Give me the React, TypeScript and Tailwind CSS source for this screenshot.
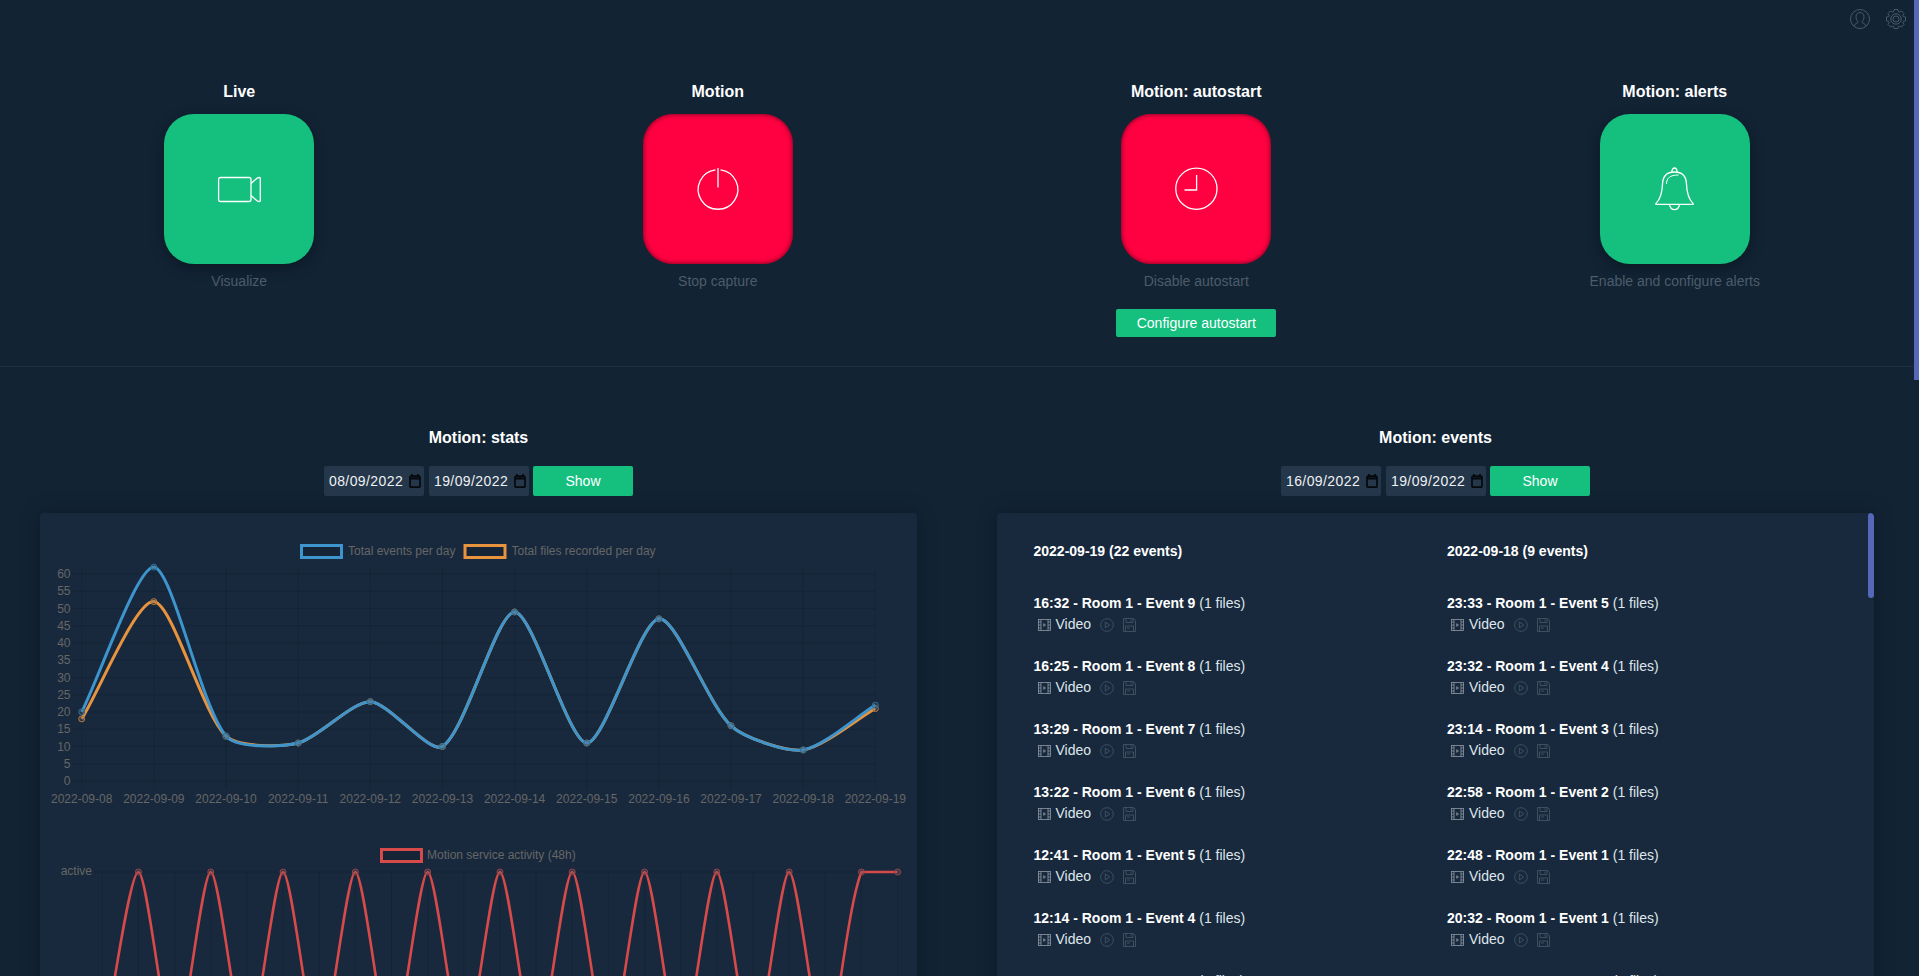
import React from 'react';

type Pt = { x: number; y: number };

const FONT_COLOR = '#666666';
const GRID = 'rgba(0,0,0,0.13)';
const TENSION = 0.25;

// chart.js style spline, capped to the plot area
const splinePath = (pts: Pt[], top: number, bottom: number, left: number, right: number) => {
  const cap = (p: Pt) => ({
    x: Math.min(right, Math.max(left, p.x)),
    y: Math.min(bottom, Math.max(top, p.y)),
  });
  const ctrl = pts.map((p, i) => {
    const a = pts[Math.max(i - 1, 0)];
    const b = pts[Math.min(i + 1, pts.length - 1)];
    const d1 = Math.hypot(p.x - a.x, p.y - a.y);
    const d2 = Math.hypot(b.x - p.x, b.y - p.y);
    const total = d1 + d2 || 1;
    const fa = (TENSION * d1) / total;
    const fb = (TENSION * d2) / total;
    return {
      prev: cap({ x: p.x - fa * (b.x - a.x), y: p.y - fa * (b.y - a.y) }),
      next: cap({ x: p.x + fb * (b.x - a.x), y: p.y + fb * (b.y - a.y) }),
    };
  });
  let d = `M${pts[0].x} ${pts[0].y}`;
  for (let i = 1; i < pts.length; i++) {
    d += ` C${ctrl[i - 1].next.x} ${ctrl[i - 1].next.y} ${ctrl[i].prev.x} ${ctrl[i].prev.y} ${pts[i].x} ${pts[i].y}`;
  }
  return d;
};

const days = ['08', '09', '10', '11', '12', '13', '14', '15', '16', '17', '18', '19'].map(d => `2022-09-${d}`);
const blue = [20, 62, 13, 11, 23, 10, 49, 11, 47, 16, 9, 22];
const orange = [18, 52, 13, 11, 23, 10, 49, 11, 47, 16, 9, 21];

const X0 = 81.7;
const XSTEP = 72.15;
const Y0 = 781;
const YUNIT = 3.45;
const TOP = Y0 - 62 * YUNIT;
const XEND = X0 + 11 * XSTEP;

const toPts = (vals: number[]) => vals.map((v, i) => ({ x: X0 + i * XSTEP, y: Y0 - v * YUNIT }));

const StatsChart: React.FC = () => {
  const bluePts = toPts(blue);
  const orangePts = toPts(orange);
  return (
    <svg className="block" width={877} height={318} viewBox="40 513 877 318" fontFamily="'Liberation Sans', Arial, sans-serif" fontSize={12}>
      <rect x={301.5} y={545.5} width={40} height={12} fill="rgba(0,0,0,0.1)" stroke="#3e95cd" strokeWidth={3} />
      <text x={348} y={555} fill={FONT_COLOR}>Total events per day</text>
      <rect x={465} y={545.5} width={40} height={12} fill="rgba(0,0,0,0.1)" stroke="#e8943f" strokeWidth={3} />
      <text x={511.5} y={555} fill={FONT_COLOR}>Total files recorded per day</text>

      {Array.from({ length: 13 }, (_, i) => i * 5).map(v => (
        <g key={v}>
          <line x1={73} x2={XEND} y1={Y0 - v * YUNIT} y2={Y0 - v * YUNIT} stroke={GRID} />
          <text x={70.5} y={Y0 - v * YUNIT + 4} textAnchor="end" fill={FONT_COLOR}>{v}</text>
        </g>
      ))}
      {days.map((d, i) => (
        <g key={d}>
          <line x1={X0 + i * XSTEP} x2={X0 + i * XSTEP} y1={TOP} y2={Y0 + 8} stroke={GRID} />
          <text x={X0 + i * XSTEP} y={803} textAnchor="middle" fill={FONT_COLOR}>{d}</text>
        </g>
      ))}

      <path d={splinePath(orangePts, TOP, Y0, X0, XEND)} fill="none" stroke="#e8943f" strokeWidth={3} />
      {orangePts.map((p, i) => (
        <circle key={i} cx={p.x} cy={p.y} r={3} fill="rgba(90,100,110,0.3)" stroke="#b97a3c" />
      ))}
      <path d={splinePath(bluePts, TOP, Y0, X0, XEND)} fill="none" stroke="#3e95cd" strokeWidth={3} />
      {bluePts.map((p, i) => (
        <circle key={i} cx={p.x} cy={p.y} r={3} fill="rgba(90,100,110,0.3)" stroke="#2f6f99" />
      ))}
    </svg>
  );
};

const ActivityChart: React.FC = () => {
  const top = 872;
  const bottom = 1050;
  const x0 = 102.3;
  const step = 36.15;
  const pts: Pt[] = Array.from({ length: 23 }, (_, i) => ({
    x: x0 + i * step,
    y: i % 2 === 1 || i === 22 ? top : bottom,
  }));
  const xEnd = x0 + 22 * step;
  return (
    <svg className="block" width={877} height={282} viewBox="40 831 877 282" fontFamily="'Liberation Sans', Arial, sans-serif" fontSize={12}>
      <rect x={381.5} y={849.5} width={40} height={12} fill="rgba(0,0,0,0.1)" stroke="#d64a4a" strokeWidth={3} />
      <text x={427} y={859} fill={FONT_COLOR}>Motion service activity (48h)</text>
      <text x={92} y={875} textAnchor="end" fill={FONT_COLOR}>active</text>
      <line x1={94} x2={xEnd} y1={top} y2={top} stroke={GRID} />
      {pts.map((p, i) => (
        <line key={i} x1={p.x} x2={p.x} y1={top} y2={bottom} stroke={GRID} />
      ))}
      <path d={splinePath(pts, top, bottom, x0, xEnd)} fill="none" stroke="#d64a4a" strokeWidth={2.6} />
      {pts.filter(p => p.y === top).map((p, i) => (
        <circle key={i} cx={p.x} cy={p.y} r={3} fill="rgba(90,100,110,0.3)" stroke="#a53f42" />
      ))}
    </svg>
  );
};

const VideoIcon = () => (
  <svg width="60" height="60" viewBox="0 0 60 60" fill="none" stroke="#fff" strokeWidth="1.3" strokeLinejoin="round">
    <rect x="9.6" y="18.5" width="32.4" height="24" rx="2" />
    <path d="M42 24.5 L48 19.3 Q49 18.5 50.5 18.5 Q51.3 18.5 51.3 19.5 V41.5 Q51.3 42.5 50.5 42.5 Q49 42.5 48 41.7 L42 36.5" />
  </svg>
);

const PowerIcon = () => (
  <svg width="60" height="60" viewBox="0 0 60 60" fill="none" stroke="#fff" strokeWidth="1.3">
    <path d="M27.5 10.8 A19.8 19.8 0 1 0 32.5 10.8" />
    <path d="M30 9 V28.5" />
  </svg>
);

const ClockIcon = () => (
  <svg width="60" height="60" viewBox="0 0 60 60" fill="none" stroke="#fff" strokeWidth="1.3">
    <circle cx="30.4" cy="29.7" r="20.6" />
    <path d="M30.6 16 V31 H18.5" />
  </svg>
);

const BellIcon = () => (
  <svg width="60" height="60" viewBox="0 0 60 60" fill="none" stroke="#fff" strokeWidth="1.3" strokeLinejoin="round">
    <path d="M26.6 13.6 Q27.2 9 29.5 9 Q31.8 9 32.4 13.6" />
    <path d="M29.5 13 C22.5 13 17.8 17 17.5 25 C17.2 34 15.5 40 11 44.4 Q10.4 45.4 11.6 45.4 H47.4 Q48.6 45.4 48 44.4 C43.5 40 41.8 34 41.5 25 C41.2 17 36.5 13 29.5 13 Z" />
    <path d="M24.5 45.6 Q25.5 50.6 29.5 50.6 Q33.5 50.6 34.5 45.6" />
    <path d="M21.5 25 C21.5 19 25 16 33.5 16" strokeWidth="1" />
  </svg>
);

const UserIcon = () => (
  <svg width="20" height="20" viewBox="0 0 20 20" fill="none" stroke="#4a5a6a" strokeWidth="1">
    <circle cx="10" cy="10" r="9.5" />
    <path d="M3.8 17 C4.5 14.5 8 14.5 8 12.8 C6.5 11 6 9.5 6 7.5 C6 5 7.8 3.6 10 3.6 C12.2 3.6 14 5 14 7.5 C14 9.5 13.5 11 12 12.8 C12 14.5 15.5 14.5 16.2 17" />
  </svg>
);

const gearPath = (() => {
  const pts: string[] = [];
  for (let i = 0; i < 8; i++) {
    const a = (i * Math.PI) / 4;
    [[-0.3, 7.8], [-0.2, 9.7], [0.2, 9.7], [0.3, 7.8]].forEach(([da, r]) => {
      pts.push(`${(10 + r * Math.cos(a + da)).toFixed(2)} ${(10 + r * Math.sin(a + da)).toFixed(2)}`);
    });
  }
  return `M${pts.join(' L')} Z`;
})();

const GearIcon = () => (
  <svg width="20" height="20" viewBox="0 0 20 20" fill="none" stroke="#4a5a6a" strokeWidth="1">
    <path d={gearPath} />
    <circle cx="10" cy="10" r="5.2" />
    <circle cx="10" cy="10" r="3" />
  </svg>
);

const FilmIcon = () => (
  <svg className="mt-[2px] shrink-0" width="13" height="12" viewBox="0 0 13 12" fill="none" stroke="#8f9aa6" strokeWidth="0.8">
    <rect x="0.5" y="0.5" width="12" height="11" />
    <path d="M3 0.5 V11.5 M10 0.5 V11.5 M0.5 3 H3 M0.5 6 H3 M0.5 9 H3 M10 3 H12.5 M10 6 H12.5 M10 9 H12.5" />
    <path d="M5.7 4.7 L7.5 6 L5.7 7.3 Z" />
  </svg>
);

const PlayIcon = () => (
  <svg className="mt-[2px] ml-[9px] shrink-0" width="14" height="14" viewBox="0 0 14 14" fill="none" stroke="#3e4f61" strokeWidth="1">
    <circle cx="7" cy="7" r="6.3" />
    <path d="M5.3 4 L9.7 7 L5.3 10 Z" />
  </svg>
);

const SaveIcon = () => (
  <svg className="mt-[2px] ml-[9px] shrink-0" width="13" height="14" viewBox="0 0 13 14" fill="none" stroke="#3e4f61" strokeWidth="1">
    <path d="M0.5 0.5 H10.5 L12.5 2.5 V13.5 H0.5 Z" />
    <path d="M3 0.5 V4.5 H10 V0.5 M8 1.5 V3.5 M2.5 13.5 V8 H10.5 V13.5 M4 10 H7" />
  </svg>
);

const CalendarIcon = () => (
  <svg width="12" height="14" viewBox="0 0 12 14" fill="none" stroke="#05090d" strokeWidth="1.7">
    <rect x="1" y="2.2" width="10" height="11" rx="1" />
    <path d="M1 4.4 H11" strokeWidth="2.2" />
    <path d="M3 0 V2 M9 0 V2" />
  </svg>
);

const ActionTile: React.FC<{ title: string; sub: string; on: boolean; icon: React.ReactNode; children?: React.ReactNode }> = ({
  title, sub, on, icon, children,
}) => (
  <div className="flex flex-col items-center">
    <div className="text-base leading-[18px] font-bold text-white">{title}</div>
    <div
      className={
        on
          ? 'mt-[13px] flex h-[150px] w-[150px] items-center justify-center rounded-[30px] bg-[#15c07f] shadow-[0_4px_14px_rgba(0,0,0,0.3)]'
          : 'mt-[13px] flex h-[150px] w-[150px] items-center justify-center rounded-[30px] bg-[#ff0040] shadow-[inset_0_0_5px_rgba(60,0,20,0.8)]'
      }
    >
      {icon}
    </div>
    <div className="mt-[7px] text-sm leading-5 text-[#4d5c6a]">{sub}</div>
    {children}
  </div>
);

const DateField: React.FC<{ value: string }> = ({ value }) => (
  <div className="flex h-[30px] w-[100px] items-center justify-between rounded-[2px] bg-[#25374a] pr-[3px] pl-[5px] text-sm tracking-[0.4px] text-[#eef1f4]">
    <span>{value}</span>
    <CalendarIcon />
  </div>
);

const DateControls: React.FC<{ from: string; to: string }> = ({ from, to }) => (
  <div className="mt-[19px] flex justify-center">
    <DateField value={from} />
    <div className="ml-[5px]">
      <DateField value={to} />
    </div>
    <button className="ml-[4px] h-[30px] w-[100px] rounded-[2px] bg-[#15c07f] text-sm text-white">Show</button>
  </div>
);

type EventRow = { time: string; name: string };

const EventColumn: React.FC<{ heading: string; events: EventRow[] }> = ({ heading, events }) => (
  <div>
    <div className="mb-[34px] text-sm leading-[18px] font-bold text-white">{heading}</div>
    {events.map(ev => (
      <div key={ev.time} className="h-[63px] text-sm leading-[18px]">
        <div className="text-[#dfe6ec]">
          <span className="font-bold text-white">{ev.time} - Room 1 - {ev.name}</span> (1 files)
        </div>
        <div className="mt-[2px] flex h-5 items-center pl-[4px]">
          <FilmIcon />
          <span className="ml-[5px] text-[#dfe6ec]">Video</span>
          <PlayIcon />
          <SaveIcon />
        </div>
      </div>
    ))}
  </div>
);

const leftEvents: EventRow[] = [
  { time: '16:32', name: 'Event 9' },
  { time: '16:25', name: 'Event 8' },
  { time: '13:29', name: 'Event 7' },
  { time: '13:22', name: 'Event 6' },
  { time: '12:41', name: 'Event 5' },
  { time: '12:14', name: 'Event 4' },
  { time: '11:58', name: 'Event 3' },
];

const rightEvents: EventRow[] = [
  { time: '23:33', name: 'Event 5' },
  { time: '23:32', name: 'Event 4' },
  { time: '23:14', name: 'Event 3' },
  { time: '22:58', name: 'Event 2' },
  { time: '22:48', name: 'Event 1' },
  { time: '20:32', name: 'Event 1' },
  { time: '20:18', name: 'Event 0' },
];

const App: React.FC = () => {
  return (
    <div className="relative h-[976px] w-full overflow-hidden bg-[#122334] font-['Liberation_Sans',Arial,sans-serif]">
      {/* page scrollbar thumb */}
      <div className="absolute top-0 right-0 h-[380px] w-[5px] bg-[#5567b8]" />

      <div className="w-[1914px]">
        <div className="flex h-[83px] justify-end gap-4 pt-[9px] pr-[8px]">
          <UserIcon />
          <GearIcon />
        </div>

        <div className="grid grid-cols-4 border-b border-[#1e2e3e] pb-[29px]">
          <ActionTile title="Live" sub="Visualize" on icon={<VideoIcon />} />
          <ActionTile title="Motion" sub="Stop capture" on={false} icon={<PowerIcon />} />
          <ActionTile title="Motion: autostart" sub="Disable autostart" on={false} icon={<ClockIcon />}>
            <button className="mt-[18px] h-[28px] w-[160px] rounded-[2px] bg-[#15c07f] text-sm text-white">Configure autostart</button>
          </ActionTile>
          <ActionTile title="Motion: alerts" sub="Enable and configure alerts" on icon={<BellIcon />} />
        </div>

        <div className="grid grid-cols-2 pt-[62px]">
          <div>
            <div className="text-center text-base leading-[18px] font-bold text-white">Motion: stats</div>
            <DateControls from="08/09/2022" to="19/09/2022" />
            <div className="mx-10 mt-[17px] rounded-[4px] bg-[#18293d] shadow-[0_0_20px_rgba(0,0,0,0.25)]">
              <StatsChart />
              <ActivityChart />
            </div>
          </div>
          <div>
            <div className="text-center text-base leading-[18px] font-bold text-white">Motion: events</div>
            <DateControls from="16/09/2022" to="19/09/2022" />
            <div className="relative mx-10 mt-[17px] h-[600px] overflow-hidden rounded-[4px] bg-[#18293d] pt-[29px] pl-[36.5px] shadow-[0_0_20px_rgba(0,0,0,0.25)]">
              <div className="absolute top-0 right-0 h-[85px] w-[6px] rounded-[3px] bg-[#5567b8]" />
              <div className="grid grid-cols-[413.5px_413.5px]">
                <EventColumn heading="2022-09-19 (22 events)" events={leftEvents} />
                <EventColumn heading="2022-09-18 (9 events)" events={rightEvents} />
              </div>
            </div>
          </div>
        </div>
      </div>
    </div>
  );
};

export default App;
